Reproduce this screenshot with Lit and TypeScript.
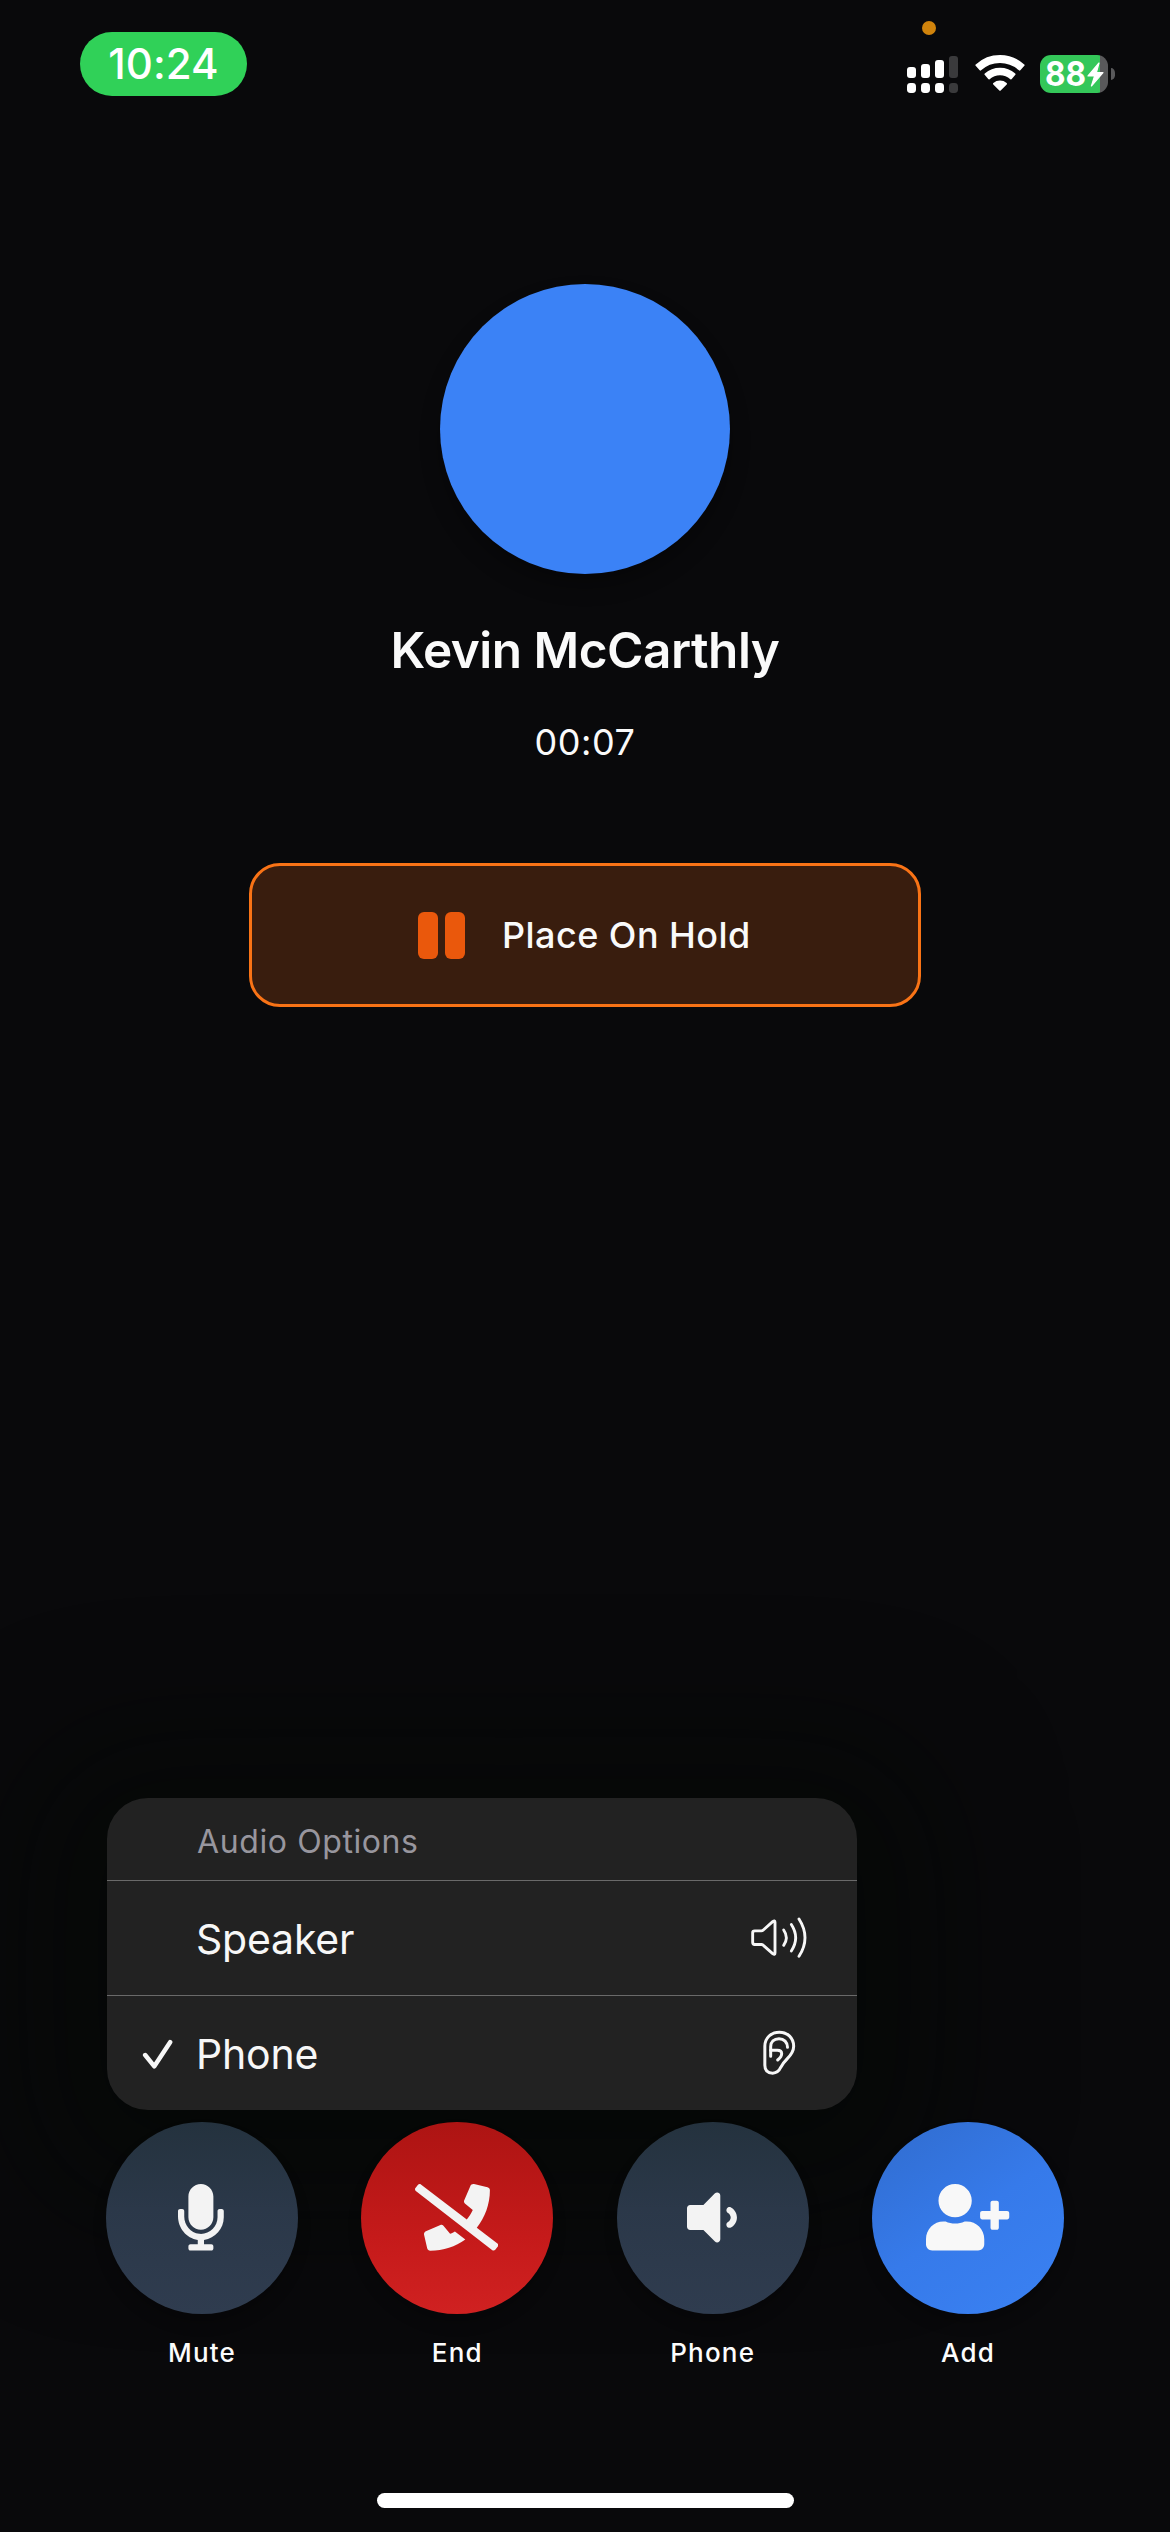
import { LitElement, html, css, svg, nothing } from "lit";
import type { TemplateResult, SVGTemplateResult } from "lit";
import { customElement, property } from "lit/decorators.js";
import { classMap } from "lit/directives/class-map.js";

@customElement("status-bar")
export class StatusBar extends LitElement {
  static styles = css`
    :host {
      display: flex;
      justify-content: space-between;
      align-items: flex-start;
      height: 104px;
      padding: 32px 55px 0 80px;
      box-sizing: border-box;
    }
    .time {
      width: 167px;
      height: 64px;
      border-radius: 32px;
      background: #30d158;
      color: #fff;
      font-size: 42px;
      font-weight: 500;
      line-height: 64px;
      letter-spacing: 0.1px;
      text-align: center;
    }
    .system {
      display: flex;
      align-items: flex-start;
      position: relative;
      padding-top: 23px;
    }
    .recording {
      position: absolute;
      left: 15px;
      top: -11px;
      width: 14px;
      height: 14px;
      border-radius: 50%;
      background: #d0830c;
    }
    svg {
      display: block;
    }
    .signal {
      width: 51px;
      height: 37px;
      margin: 1px 17px 0 0;
    }
    .wifi {
      width: 50px;
      height: 38px;
      margin-right: 15px;
      margin-top: -1px;
    }
    .battery {
      display: flex;
      align-items: center;
      gap: 3px;
    }
    .cell {
      display: flex;
      align-items: center;
      width: 68px;
      height: 38px;
      box-sizing: border-box;
      padding-left: 5px;
      border-radius: 11px;
      background: linear-gradient(90deg, #34c759 60px, #59595b 60px);
    }
    .percent {
      flex: none;
      width: 42px;
      font-size: 34px;
      font-weight: 700;
      line-height: 38px;
      transform: scaleX(0.93);
      transform-origin: 0 50%;
    }
    .bolt {
      flex: none;
      width: 17px;
      height: 25px;
    }
    .tip {
      width: 4px;
      height: 12px;
      border-radius: 0 5px 5px 0 / 0 6px 6px 0;
      background: #59595b;
    }
  `;

  render() {
    return html`
      <div class="time">10:24</div>
      <div class="system">
        <span class="recording"></span>
        <svg class="signal" viewBox="0 0 51 37" fill="#fff">
          <rect x="0" y="11" width="9" height="11" rx="3" />
          <rect x="14" y="8" width="9" height="14" rx="3" />
          <rect x="28" y="4" width="9" height="18" rx="3" />
          <rect x="42" y="0" width="9" height="22" rx="3" fill="#3a3a3c" />
          <rect x="0" y="27" width="9" height="10" rx="3.4" />
          <rect x="14" y="27" width="9" height="10" rx="3.4" />
          <rect x="28" y="27" width="9" height="10" rx="3.4" />
          <rect x="42" y="27" width="9" height="10" rx="3.4" fill="#3a3a3c" />
        </svg>
        <svg class="wifi" viewBox="-1 -1 50 38" fill="#fff" stroke="#fff" stroke-width="2" stroke-linejoin="round">
          <path d="M.4 10.2A35 35 0 0 1 47.6 10.2L43.6 14.6A29 29 0 0 0 4.4 14.6Z" />
          <path d="M9.4 19.2A22.3 22.3 0 0 1 38.6 19.2L35 23.4A16.7 16.7 0 0 0 13 23.4Z" />
          <path d="M18 28.8A9.3 9.3 0 0 1 30 28.8L24 34.8Z" />
        </svg>
        <div class="battery">
          <div class="cell">
            <span class="percent">88</span>
            <svg class="bolt" viewBox="0 0 17 25" fill="#fff" stroke="#fff" stroke-width="1.2" stroke-linejoin="round">
              <path d="M12 1L1 14H7.6L4.4 24L16 10.6H9.4Z" />
            </svg>
          </div>
          <span class="tip"></span>
        </div>
      </div>
    `;
  }
}

type ActionKind = "mute" | "end" | "audio" | "add";

const ACTION_ICONS: Record<ActionKind, { width: number; shape: SVGTemplateResult }> = {
  mute: {
    width: 352,
    shape: svg`<path d="M176 352c53.02 0 96-42.98 96-96V96c0-53.02-42.98-96-96-96S80 42.98 80 96v160c0 53.02 42.98 96 96 96zm160-160h-16c-8.84 0-16 7.16-16 16v48c0 74.8-64.49 134.82-140.79 127.38C96.71 376.89 48 317.11 48 250.3V208c0-8.84-7.16-16-16-16H16c-8.84 0-16 7.16-16 16v40.16c0 89.64 63.97 169.55 152 181.69V464H96c-8.84 0-16 7.16-16 16v16c0 8.84 7.16 16 16 16h160c8.84 0 16-7.16 16-16v-16c0-8.84-7.16-16-16-16h-56v-33.77C285.71 418.47 352 344.9 352 256v-48c0-8.84-7.16-16-16-16z"/>`,
  },
  end: {
    width: 640,
    shape: svg`<path d="M268.2 381.4l-49.6-60.6c-5.6-6.8-14.9-9.2-23-5.7l-112 48c-10.7 4.6-16.5 16.1-13.9 27.5l24 104c2.5 10.8 12.1 18.6 23.4 18.6 100.7 0 193.7-32.4 269.7-86.9l-80-61.8c-10.9 6.5-22.1 12.7-33.6 18.1zm365.6 76.7L475.1 335.5C537.9 256.4 576 156.9 576 48c0-11.2-7.7-20.9-18.6-23.4l-104-24c-11.3-2.6-22.9 3.3-27.5 13.9l-48 112c-3.5 8.2-1.1 17.5 5.7 23.1l60.6 49.6c-12.2 26.1-27.9 50.3-46 72.8L45.5 3.4C38.5-2 28.5-.8 23 6.2L3.4 31.4c-5.4 7-4.2 17 2.8 22.4l588.4 454.7c7 5.4 17 4.2 22.5-2.8l19.6-25.3c5.4-6.8 4.1-16.9-2.9-22.3z"/>`,
  },
  audio: {
    width: 384,
    shape: svg`<path d="M215.03 72.04L126.06 161H24c-13.26 0-24 10.74-24 24v144c0 13.25 10.74 24 24 24h102.06l88.97 88.95c15.03 15.03 40.97 4.47 40.97-16.97V89.02c0-21.47-25.96-31.98-40.97-16.98zm123.2 108.08c-11.58-6.33-26.19-2.16-32.61 9.45-6.39 11.61-2.16 26.2 9.45 32.61C327.98 229.28 336 242.62 336 257c0 14.38-8.02 27.72-20.92 34.81-11.61 6.41-15.84 21-9.45 32.61 6.43 11.66 21.05 15.8 32.61 9.45 28.23-15.55 45.77-45 45.77-76.88s-17.54-61.32-45.78-76.87z"/>`,
  },
  add: {
    width: 640,
    shape: svg`<path d="M624 208h-64v-64c0-8.8-7.2-16-16-16h-32c-8.8 0-16 7.2-16 16v64h-64c-8.8 0-16 7.2-16 16v32c0 8.8 7.2 16 16 16h64v64c0 8.8 7.2 16 16 16h32c8.8 0 16-7.2 16-16v-64h64c8.8 0 16-7.2 16-16v-32c0-8.8-7.2-16-16-16zm-400 48c70.7 0 128-57.3 128-128S294.7 0 224 0 96 57.3 96 128s57.3 128 128 128zm89.6 32h-16.7c-22.2 10.2-46.9 16-72.9 16s-50.6-5.8-72.9-16h-16.7C60.2 288 0 348.2 0 422.4V464c0 26.5 21.5 48 48 48h352c26.5 0 48-21.5 48-48v-41.6c0-74.2-60.2-134.4-134.4-134.4z"/>`,
  },
};

@customElement("call-action")
export class CallAction extends LitElement {
  static styles = css`
    :host {
      display: flex;
      flex-direction: column;
      align-items: center;
      width: 192px;
    }
    .disc {
      display: grid;
      place-items: center;
      width: 192px;
      height: 192px;
      box-sizing: border-box;
      padding-bottom: 1px;
      border-radius: 50%;
      background: linear-gradient(180deg, #24323e 0%, #2b3849 45%, #2f3c4f 100%);
      box-shadow: 0 10px 14px rgba(0, 0, 0, 0.2);
    }
    .disc.end {
      background: linear-gradient(180deg, #ad1413 0%, #c51a1a 60%, #d02121 100%);
    }
    .disc.add {
      background: linear-gradient(145deg, #3270d6 15%, #367aea 50%, #397ff0 85%);
    }
    .glyph {
      display: block;
      height: 66.6px;
      width: auto;
      fill: #f3f3f3;
    }
    .add .glyph {
      fill: #f8f8f8;
    }
    .mute .glyph,
    .audio .glyph {
      margin-right: 2px;
    }
    .end .glyph {
      margin-right: 1px;
    }
    .label {
      margin-top: 22px;
      font-size: 26px;
      font-weight: 500;
      line-height: 34px;
      letter-spacing: 1.2px;
      text-align: center;
      color: #fcfcfc;
    }
  `;

  @property() kind: ActionKind = "mute";
  @property() label = "";

  render() {
    const icon = ACTION_ICONS[this.kind];
    return html`
      <div class=${classMap({ disc: true, [this.kind]: true })}>
        <svg class="glyph" viewBox="0 0 ${icon.width} 512">${icon.shape}</svg>
      </div>
      <div class="label">${this.label}</div>
    `;
  }
}

interface AudioRoute {
  name: string;
  selected: boolean;
  icon: TemplateResult;
}

const ROUTES: AudioRoute[] = [
  {
    name: "Speaker",
    selected: false,
    icon: html`<svg width="56" height="41.33" viewBox="269 412 168 124" fill="none" stroke="#f7f7f7" stroke-width="8.6" stroke-linecap="round" stroke-linejoin="round">
      <path d="M274 459Q274 453.500 280 453.500H300Q303.500 453.500 306 451L334 426Q341 420.500 341 428V520Q341 527 334 522L306 497Q303.500 494.500 300 494.500H280Q274 494.500 274 488Z" />
      <path d="M367 451Q383 474 367 497" />
      <path d="M390 434.500Q416 474 390 514" />
      <path d="M413 418Q449 474 413 530" />
    </svg>`,
  },
  {
    name: "Phone",
    selected: true,
    icon: html`<svg width="35" height="47.33" viewBox="305 748 105 142" fill="none" stroke="#f7f7f7" stroke-width="9" stroke-linecap="round" stroke-linejoin="round">
      <path d="M313.500 800C313.500 774 333 757.500 357 757.500C382 757.500 400 775 400 800C400 815 392 826 381 837C370 848 367 853 362 862C356 875 349 880.500 337 880.500C322 880.500 313.500 872 313.500 857Z" />
      <path d="M331 830V801C331 787 341 777 356 777C371 777 381.500 788 381.500 803" />
      <path d="M331 812H351C359 812 364 816 364 822C364 831 358 836 352 841" />
    </svg>`,
  },
];

@customElement("audio-menu")
export class AudioMenu extends LitElement {
  static styles = css`
    :host {
      display: block;
      width: 750px;
      height: 312px;
      border-radius: 41px;
      overflow: hidden;
      background: #222;
      box-shadow: 0 20px 120px 80px rgba(4, 8, 4, 0.5);
    }
    .title {
      height: 82px;
      box-sizing: border-box;
      padding: 5px 0 0 90px;
      font-size: 32px;
      line-height: 77px;
      letter-spacing: 0.6px;
      color: #98969e;
    }
    .row {
      display: grid;
      grid-template-columns: 89px 1fr 100px;
      align-items: center;
      height: 115px;
      box-sizing: border-box;
      padding-right: 28px;
      border-top: 1px solid #6a6a6a;
      color: #f7f7f7;
    }
    .mark {
      display: flex;
      padding-left: 35px;
      padding-top: 2px;
    }
    .name {
      padding-top: 2px;
      font-size: 41px;
      line-height: 60px;
      letter-spacing: -0.2px;
    }
    .icon {
      display: flex;
      justify-content: center;
    }
  `;

  render() {
    return html`
      <div class="title">Audio Options</div>
      ${ROUTES.map(
        (route) => html`
          <div class="row">
            <span class="mark">
              ${route.selected
                ? html`<svg width="31.3" height="30.7" viewBox="156 775 94 92" fill="none" stroke="#f7f7f7" stroke-width="13.5" stroke-linecap="round" stroke-linejoin="round">
                    <path d="M165.500 823L193 857L240.500 784.500" />
                  </svg>`
                : nothing}
            </span>
            <span class="name">${route.name}</span>
            <span class="icon">${route.icon}</span>
          </div>
        `
      )}
    `;
  }
}

const ACTIONS: { kind: ActionKind; label: string }[] = [
  { kind: "mute", label: "Mute" },
  { kind: "end", label: "End" },
  { kind: "audio", label: "Phone" },
  { kind: "add", label: "Add" },
];

@customElement("app-root")
export class AppRoot extends LitElement {
  static styles = css`
    :host {
      display: flex;
      flex-direction: column;
      width: 1170px;
      height: 2532px;
      overflow: hidden;
      background: #09090b;
      color: #fff;
      font-family: Inter, "Liberation Sans", sans-serif;
    }
    .caller {
      display: flex;
      flex-direction: column;
      align-items: center;
      padding-top: 180px;
    }
    .avatar {
      width: 290px;
      height: 290px;
      border-radius: 50%;
      background: #3b82f6;
      box-shadow: 0 12px 20px rgba(0, 0, 0, 0.3);
    }
    .name {
      margin-top: 44px;
      font-size: 49.5px;
      font-weight: 600;
      line-height: 64px;
      letter-spacing: -0.5px;
      color: #fafafa;
    }
    .timer {
      margin-top: 38px;
      font-size: 36px;
      font-weight: 400;
      line-height: 44px;
      letter-spacing: 0.6px;
      color: #fafafa;
    }
    .hold {
      display: flex;
      align-items: center;
      gap: 37px;
      width: 672px;
      height: 144px;
      margin: 99px auto 0;
      padding: 0 0 0 166px;
      box-sizing: border-box;
      border: 3px solid #f97316;
      border-radius: 31px;
      background: #391d0e;
      color: #fafafa;
      font: inherit;
      font-size: 36px;
      font-weight: 500;
      letter-spacing: 0.45px;
    }
    .pause {
      display: flex;
      gap: 7px;
    }
    .bar {
      width: 20px;
      height: 47px;
      border-radius: 6px;
      background: #ea580c;
    }
    .spacer {
      flex: 1;
    }
    audio-menu {
      margin-left: 107px;
    }
    .actions {
      position: relative;
      display: flex;
      justify-content: space-between;
      margin: 12px 106px 0;
    }
    .home {
      width: 417px;
      height: 15px;
      margin: 123px auto 24px;
      border-radius: 8px;
      background: #fff;
      position: relative;
    }
  `;

  render() {
    return html`
      <status-bar></status-bar>
      <div class="caller">
        <div class="avatar"></div>
        <div class="name">Kevin McCarthly</div>
        <div class="timer">00:07</div>
      </div>
      <button class="hold">
        <span class="pause"><span class="bar"></span><span class="bar"></span></span>
        <span>Place On Hold</span>
      </button>
      <div class="spacer"></div>
      <audio-menu></audio-menu>
      <div class="actions">
        ${ACTIONS.map((a) => html`<call-action .kind=${a.kind} .label=${a.label}></call-action>`)}
      </div>
      <div class="home"></div>
    `;
  }
}
